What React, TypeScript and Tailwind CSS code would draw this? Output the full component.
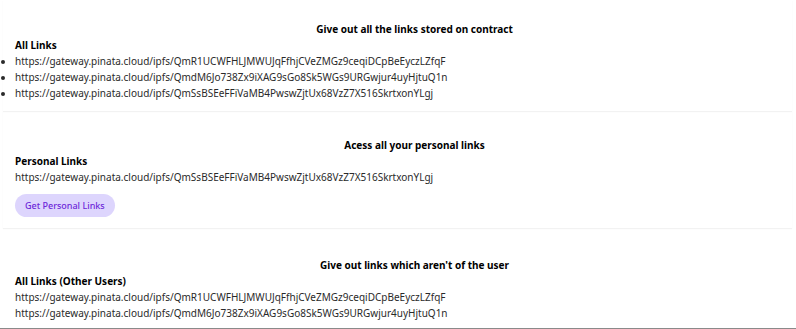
const allLinks = [
  "https://gateway.pinata.cloud/ipfs/QmR1UCWFHLJMWUJqFfhjCVeZMGz9ceqiDCpBeEyczLZfqF",
  "https://gateway.pinata.cloud/ipfs/QmdM6Jo738Zx9iXAG9sGo8Sk5WGs9URGwjur4uyHjtuQ1n",
  "https://gateway.pinata.cloud/ipfs/QmSsBSEeFFiVaMB4PwswZjtUx68VzZ7X516SkrtxonYLgj",
];

const personalLinks = [allLinks[2]];
const otherLinks = [allLinks[0], allLinks[1]];

function Heading({ children }: { children: string }) {
  return (
    <h2 className="pl-[34px] text-center text-[10px] font-bold leading-4 text-black">{children}</h2>
  );
}

export default function App() {
  return (
    <div
      className="flex h-[329px] w-[796px] flex-col overflow-hidden bg-white text-[10px] leading-4 text-[#2a2a2a]"
      style={{ fontFamily: '"Segoe UI", "Noto Sans", sans-serif' }}
    >
      <section className="ml-[3px] mr-[4px] pb-[10px] pt-[21px] shadow-[0_1px_1px_rgba(0,0,0,0.05)]">
        <Heading>Give out all the links stored on contract</Heading>
        <div className="pl-[12px]">
          <h3 className="font-bold text-black">All Links</h3>
          <ul className="list-outside list-disc pl-0">
            {allLinks.map((link) => (
              <li key={link}>{link}</li>
            ))}
          </ul>
        </div>
      </section>

      <section className="ml-[3px] mr-[4px] pb-[11px] pt-[26px] shadow-[0_1px_1px_rgba(0,0,0,0.05)]">
        <Heading>Acess all your personal links</Heading>
        <div className="pl-[12px]">
          <h3 className="font-bold text-black">Personal Links</h3>
          {personalLinks.map((link) => (
            <p key={link}>{link}</p>
          ))}
          <button className="mt-[9px] h-[23px] rounded-full bg-[#ddd5fd] px-[10px] text-[9px] font-medium text-[#6d28d9]">
            Get Personal Links
          </button>
        </div>
      </section>

      <section className="ml-[3px] mr-[4px] flex-1 pt-[29px]">
        <Heading>Give out links which aren't of the user</Heading>
        <div className="pl-[12px]">
          <h3 className="font-bold text-black">All Links (Other Users)</h3>
          {otherLinks.map((link) => (
            <p key={link}>{link}</p>
          ))}
        </div>
      </section>
      <div className="h-px shrink-0 bg-[#8a8a8a]" />
    </div>
  );
}
